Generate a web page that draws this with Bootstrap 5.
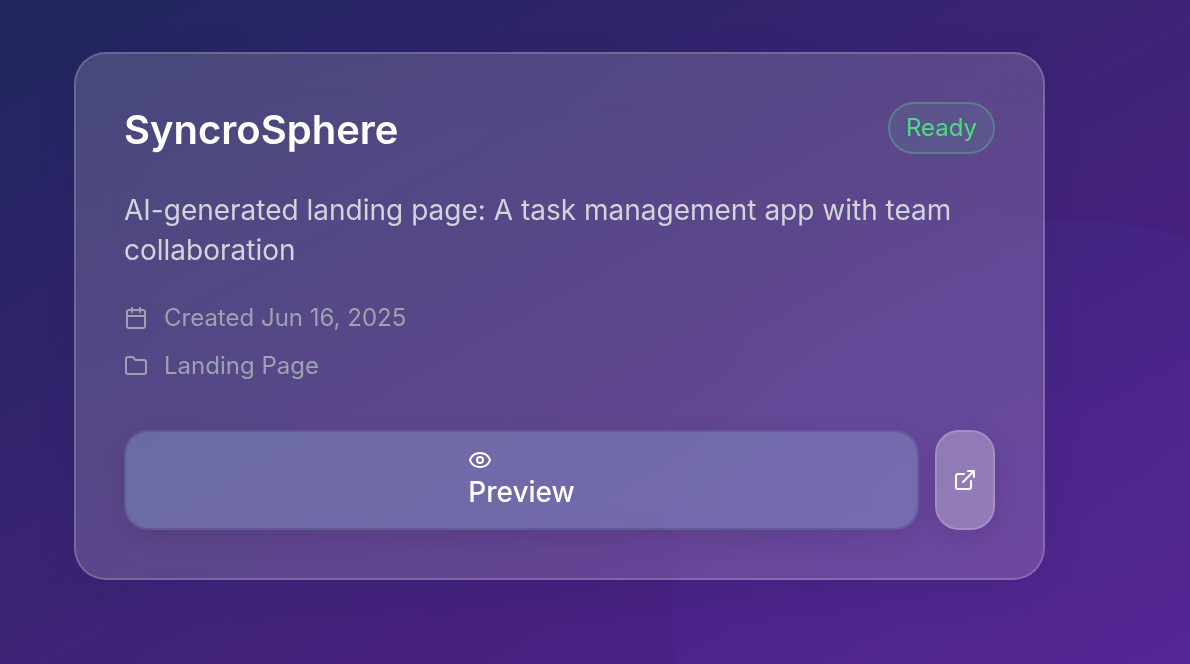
<!DOCTYPE html>
<html lang="en">
<head>
<meta charset="utf-8">
<meta name="viewport" content="width=device-width, initial-scale=1">
<title>SyncroSphere</title>
<link href="https://cdn.jsdelivr.net/npm/bootstrap@5.3.0/dist/css/bootstrap.min.css" rel="stylesheet">
<style>
  body {
    font-family: Inter, "Liberation Sans", sans-serif;
    color: #fff;
    background: #45207b;
  }
  .stage {
    min-height: 100vh;
    padding: 52px 145px 84px 74px;
    background: linear-gradient(to bottom right, #1f265b 0%, #292466 18%, #3d2375 50%, #46207f 68%, #582392 100%);
    isolation: isolate;
  }
  /* Soft decorative orb behind the card */
  .orb {
    position: absolute;
    z-index: -1;
    top: 220px;
    right: -270px;
    width: 788px;
    height: 788px;
    border-radius: 50%;
    background: linear-gradient(to bottom, rgba(68, 68, 170, .13), rgba(90, 60, 170, .1));
  }
  .project-card {
    --bs-card-bg: rgba(255, 255, 255, .165);
    --bs-card-border-width: 2px;
    --bs-card-border-color: rgba(255, 255, 255, .18);
    --bs-card-border-radius: 32px;
    --bs-card-color: #fff;
    -webkit-backdrop-filter: blur(32px);
    backdrop-filter: blur(32px);
    box-shadow: 0 8px 32px rgba(31, 38, 100, .16);
  }
  .project-card .card-body { padding: 48px; }
  .project-title { font-size: 40px; line-height: 56px; font-weight: 600; }
  .status-pill {
    padding: 8px 16px;
    border: 2px solid rgba(88, 196, 142, .45);
    border-radius: 26px;
    background: rgba(96, 140, 150, .22);
    background-clip: padding-box;
    color: #4ade80;
    font-size: 24px;
    line-height: 32px;
  }
  .project-text { margin: 32px 0; font-size: 28px; line-height: 40px; color: #d1d5db; }
  .meta-list { margin-bottom: 48px; font-size: 24px; line-height: 32px; color: #9ca3af; }
  .line-icon {
    width: 24px;
    height: 24px;
    fill: none;
    stroke: currentColor;
    stroke-width: 2;
    stroke-linecap: round;
    stroke-linejoin: round;
    flex: none;
  }
  .action-btn {
    --bs-btn-border-width: 2px;
    --bs-btn-border-radius: 24px;
    --bs-btn-color: #fff;
    --bs-btn-hover-color: #fff;
    --bs-btn-padding-y: 16px;
    --bs-btn-padding-x: 16px;
    --bs-btn-font-size: 28px;
    --bs-btn-font-weight: 500;
    --bs-btn-line-height: 40px;
    background-clip: padding-box;
    box-shadow: 0 8px 24px rgba(60, 10, 80, .14);
  }
  .preview-btn {
    --bs-btn-bg: rgba(132, 150, 200, .45);
    --bs-btn-border-color: rgba(104, 116, 152, .45);
    --bs-btn-hover-bg: rgba(132, 150, 200, .6);
  }
  .open-btn {
    --bs-btn-bg: rgba(255, 255, 255, .28);
    --bs-btn-border-color: rgba(255, 255, 255, .4);
    --bs-btn-hover-bg: rgba(255, 255, 255, .36);
    width: 60px;
  }
</style>
</head>
<body>
<main class="stage position-relative overflow-hidden">
  <div class="orb"></div>
  <article class="card project-card">
    <div class="card-body">
      <header class="d-flex justify-content-between align-items-start">
        <h1 class="project-title mb-0">SyncroSphere</h1>
        <span class="status-pill">Ready</span>
      </header>
      <p class="project-text">AI-generated landing page: A task management app with team collaboration</p>
      <div class="meta-list d-flex flex-column gap-3">
        <div class="d-flex align-items-center gap-3">
          <svg class="line-icon" viewBox="0 0 24 24" aria-hidden="true"><path d="M8 2v4M16 2v4M3 10h18"/><rect x="3" y="4" width="18" height="18" rx="2"/></svg>
          <span>Created Jun 16, 2025</span>
        </div>
        <div class="d-flex align-items-center gap-3">
          <svg class="line-icon" viewBox="0 0 24 24" aria-hidden="true"><path d="M20 20a2 2 0 0 0 2-2V8a2 2 0 0 0-2-2h-7.900a2 2 0 0 1-1.690-.9L9.600 3.900A2 2 0 0 0 7.930 3H4a2 2 0 0 0-2 2v13a2 2 0 0 0 2 2Z"/></svg>
          <span>Landing Page</span>
        </div>
      </div>
      <div class="d-flex gap-3">
        <button type="button" class="btn action-btn preview-btn flex-grow-1 d-flex justify-content-center">
          <span class="d-flex flex-column align-items-start">
            <svg class="line-icon" viewBox="0 0 24 24" aria-hidden="true"><path d="M2.060 12.350a1 1 0 0 1 0-.7 10.750 10.750 0 0 1 19.880 0 1 1 0 0 1 0 .7 10.750 10.750 0 0 1-19.880 0"/><circle cx="12" cy="12" r="3"/></svg>
            <span>Preview</span>
          </span>
        </button>
        <button type="button" class="btn action-btn open-btn d-flex align-items-center justify-content-center" aria-label="Open in new tab">
          <svg class="line-icon" viewBox="0 0 24 24" aria-hidden="true"><path d="M15 3h6v6M10 14 21 3M18 13v6a2 2 0 0 1-2 2H5a2 2 0 0 1-2-2V8a2 2 0 0 1 2-2h6"/></svg>
        </button>
      </div>
    </div>
  </article>
</main>
<script src="https://cdn.jsdelivr.net/npm/bootstrap@5.3.0/dist/js/bootstrap.bundle.min.js"></script>
</body>
</html>
